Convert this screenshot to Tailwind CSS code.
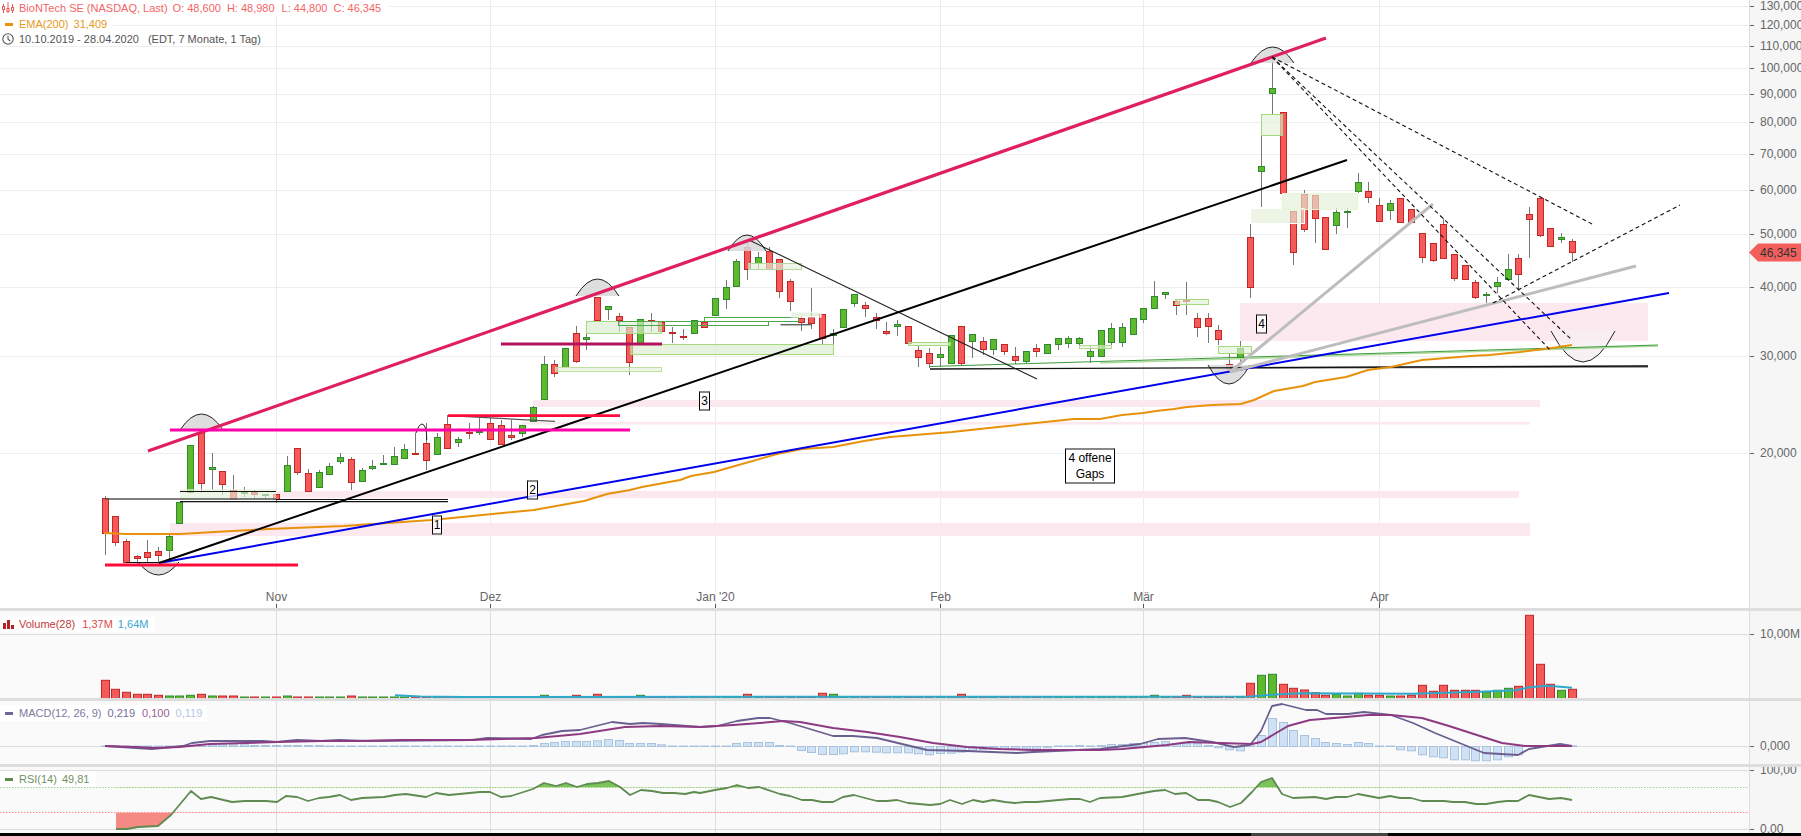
<!DOCTYPE html>
<html lang="de">
<head>
    <meta charset="UTF-8">
    <title>BioNTech SE - Chart</title>
    <script src="https://cdn.jsdelivr.net/npm/@tailwindcss/browser@4"></script>
</head>
<body class="bg-white overflow-hidden">
<div class="flex flex-col h-screen w-[1801px] font-['Liberation_Sans',Arial,sans-serif] text-[11px] leading-4">

    <!-- Price panel -->
    <div class="flex h-[608px] shrink-0">
        <div class="relative w-[1749px]">
            <svg id="price" class="block" width="1749" height="608" viewBox="0 0 1749 608"></svg>

            <div class="absolute left-0 top-0">
                <div class="flex items-center h-4 w-fit bg-white pr-[7px] text-[#f46464]">
                    <svg class="ml-[2px] mr-[5px]" width="12" height="12" viewBox="0 0 12 12" fill="none" stroke="#ee5a5a">
                        <path d="M1.5 2v9M6 0v11M10.5 2v9"/>
                        <rect x="0.5" y="4.5" width="2" height="3" fill="#fff"/>
                        <rect x="5" y="6.5" width="2" height="3" fill="#fff"/>
                        <rect x="9.5" y="5.5" width="2" height="3" fill="#fff"/>
                    </svg>
                    <span>BioNTech SE (NASDAQ, Last)</span>
                    <span class="ml-[5px]">O: 48,600</span>
                    <span class="ml-[6px]">H: 48,980</span>
                    <span class="ml-[7px]">L: 44,800</span>
                    <span class="ml-[6px]">C: 46,345</span>
                </div>
                <div class="flex items-center h-4 w-fit bg-white pr-[6px] text-[#e8981c]">
                    <span class="ml-[5px] mr-[6px] w-2 h-[3px] bg-[#e8920c]"></span>
                    <span>EMA(200)</span>
                    <span class="ml-[5px]">31,409</span>
                </div>
                <div class="flex items-center h-[14px] w-fit bg-white pr-[7px] text-[#555555]">
                    <svg class="ml-[2px] mr-[5px]" width="12" height="12" viewBox="0 0 12 12" fill="none" stroke="#555" stroke-width="1.1">
                        <circle cx="6" cy="6" r="5.2"/>
                        <path d="M6 2.8V6.3L8.3 8"/>
                    </svg>
                    <span>10.10.2019 - 28.04.2020</span>
                    <span class="ml-[9px]">(EDT, 7 Monate, 1 Tag)</span>
                </div>
            </div>

            <div class="absolute left-[432px] top-[515px] w-[10px] h-5 flex items-center justify-center bg-white/70 border-x border-x-black border-y-2 border-y-[#888888] text-xs">1</div>
            <div class="absolute left-[527px] top-[480px] w-[11px] h-5 flex items-center justify-center bg-white/70 border-x border-x-black border-y-2 border-y-[#888888] text-xs">2</div>
            <div class="absolute left-[699px] top-[391px] w-[11px] h-5 flex items-center justify-center bg-white/70 border-x border-x-black border-y-2 border-y-[#888888] text-xs">3</div>
            <div class="absolute left-[1256px] top-[314px] w-[11px] h-5 flex items-center justify-center bg-white/70 border-x border-x-black border-y-2 border-y-[#888888] text-xs">4</div>
            <div class="absolute left-[1065px] top-[448px] w-[50px] h-9 flex flex-col items-center justify-center bg-white border-x border-x-black border-y-2 border-y-[#888888] text-xs text-center">
                <span>4 offene</span>
                <span>Gaps</span>
            </div>
        </div>
        <svg id="price-axis" class="block bg-[#f6f6f6]" width="52" height="608" viewBox="1749 0 52 608"></svg>
    </div>
    <div class="h-[3px] shrink-0 bg-[#dddddd]"></div>

    <!-- Volume panel -->
    <div class="flex h-[87px] shrink-0">
        <div class="relative w-[1749px] bg-[#fafafa]">
            <svg id="volume" class="block" width="1749" height="87" viewBox="0 611 1749 87"></svg>
            <div class="absolute left-0 top-[5px] flex items-center h-4 w-[154px] bg-white">
                <svg class="ml-[3px] mr-[5px]" width="11" height="9" viewBox="0 0 11 9" fill="#b92222">
                    <rect x="0" y="3" width="3" height="6"/><rect x="4" y="0" width="3" height="9"/><rect x="8" y="5" width="3" height="4"/>
                </svg>
                <span class="text-[#c23a3a]">Volume(28)</span>
                <span class="ml-[7px] text-[#e04848]">1,37M</span>
                <span class="ml-[5px] text-[#3aa6cf]">1,64M</span>
            </div>
        </div>
        <svg id="volume-axis" class="block bg-[#f6f6f6]" width="52" height="87" viewBox="1749 611 52 87"></svg>
    </div>
    <div class="h-[3px] shrink-0 bg-[#dddddd]"></div>

    <!-- MACD panel -->
    <div class="flex h-[63px] shrink-0">
        <div class="relative w-[1749px] bg-[#fafafa]">
            <svg id="macd" class="block" width="1749" height="63" viewBox="0 701 1749 63"></svg>
            <div class="absolute left-0 top-[4px] flex items-center h-4 w-[207px] bg-white">
                <span class="ml-[5px] mr-[6px] w-2 h-[3px] bg-[#6a6a94]"></span>
                <span class="text-[#7a7a9e]">MACD(12, 26, 9)</span>
                <span class="ml-[6px] text-[#6f6f96]">0,219</span>
                <span class="ml-[7px] text-[#9c5a92]">0,100</span>
                <span class="ml-[6px] text-[#b4c6e0]">0,119</span>
            </div>
        </div>
        <svg id="macd-axis" class="block bg-[#f6f6f6]" width="52" height="63" viewBox="1749 701 52 63"></svg>
    </div>
    <div class="h-[3px] shrink-0 bg-[#dddddd]"></div>

    <!-- RSI panel -->
    <div class="flex h-[66px] shrink-0">
        <div class="relative w-[1749px] bg-[#fafafa]">
            <svg id="rsi" class="block" width="1749" height="66" viewBox="0 767 1749 66"></svg>
            <div class="absolute left-0 top-[4px] flex items-center h-4 w-[96px] bg-white">
                <span class="ml-[5px] mr-[6px] w-2 h-[3px] bg-[#5f8a50]"></span>
                <span class="text-[#6f9162]">RSI(14)</span>
                <span class="ml-[5px] text-[#6f9162]">49,81</span>
            </div>
        </div>
        <svg id="rsi-axis" class="block bg-[#f6f6f6]" width="52" height="66" viewBox="1749 767 52 66"></svg>
    </div>
    <div class="flex h-[3px] shrink-0 bg-black">
        <div class="ml-[1251px] w-[137px] bg-[#444444]"></div>
    </div>
</div>

<script>
const NS = 'http://www.w3.org/2000/svg';
const $ = id => document.getElementById(id);
function add(svg, tag, attrs, text) {
    const n = document.createElementNS(NS, tag);
    for (const k in attrs) n.setAttribute(k, attrs[k]);
    if (text) n.textContent = text;
    svg.appendChild(n);
    return n;
}
const line = (svg, x1, y1, x2, y2, stroke, w, extra) => add(svg, 'line', Object.assign({x1, y1, x2, y2, stroke, 'stroke-width': w}, extra || {}));
const poly = (svg, pts, stroke, w, extra) => add(svg, 'polyline', Object.assign({points: pts.map(p => p.join(',')).join(' '), fill: 'none', stroke, 'stroke-width': w, 'stroke-linejoin': 'round'}, extra || {}));
const cx = i => 104.5 + 10.71 * i;
const months = [[276, 'Nov'], [490, 'Dez'], [715, "Jan '20"], [940, 'Feb'], [1143, 'Mär'], [1379, 'Apr']];

// body top, body bottom, wick top, wick bottom, colour
const candles = [
[498,533,496,555,'r'],[516,542,516,546,'r'],[541,562,539,563,'r'],[556,558,555,565,'r'],[552,557,540,563,'r'],[551,555,547,563,'r'],
[536,550,535,562,'g'],[502,523,502,523,'g'],[445,492,445,492,'g'],[432,483,430,493,'r'],[467,469,453,490,'g'],[471,484,471,495,'r'],
[490,499,475,500,'r'],[492,493,487,497,'g'],[492,494,490,499,'r'],[494,495,494,499,'g'],[494,499,494,503,'r'],[465,491,456,491,'g'],
[448,472,448,475,'r'],[473,491,469,491,'r'],[472,487,470,487,'g'],[466,474,463,474,'g'],[457,461,453,464,'g'],[459,482,457,490,'r'],
[470,481,468,481,'g'],[466,468,460,470,'g'],[463,464,455,465,'g'],[456,464,447,464,'g'],[449,458,444,458,'g'],[453,454,433,454,'r'],
[443,460,423,470,'r'],[437,454,433,454,'g'],[424,448,415,449,'r'],[439,442,437,447,'g'],[432,433,423,439,'r'],[431,432,418,435,'g'],
[423,439,418,440,'r'],[425,444,420,444,'r'],[435,437,420,440,'r'],[425,433,425,437,'g'],[407,421,406,422,'g'],[364,399,356,400,'g'],
[364,373,360,377,'r'],[348,367,348,367,'g'],[333,361,326,363,'r'],[337,339,326,350,'g'],[297,320,297,321,'r'],[306,309,306,320,'g'],
[316,320,313,332,'r'],[327,362,327,375,'r'],[319,343,319,343,'g'],[320,321,313,332,'r'],[322,331,322,333,'r'],[332,333,327,343,'r'],
[336,337,329,340,'r'],[320,333,320,333,'g'],[322,327,318,328,'r'],[298,315,298,316,'g'],[287,299,280,309,'g'],[261,286,259,287,'g'],
[247,269,240,280,'r'],[257,263,252,270,'g'],[251,269,247,270,'r'],[259,291,259,298,'r'],[281,301,279,311,'r'],[318,322,316,331,'r'],
[317,323,288,329,'r'],[314,338,314,345,'r'],[333,335,329,344,'g'],[309,327,309,327,'g'],[294,303,294,307,'g'],[305,308,302,317,'r'],
[317,320,313,329,'r'],[331,333,322,335,'r'],[324,326,320,336,'g'],[326,343,326,343,'r'],[350,357,345,367,'r'],[353,363,348,368,'r'],
[354,357,347,367,'g'],[335,363,335,363,'g'],[326,363,326,366,'r'],[334,341,334,358,'g'],[341,349,337,355,'r'],[339,349,339,355,'g'],
[344,351,344,355,'r'],[356,360,347,364,'r'],[351,361,351,363,'g'],[348,351,344,357,'r'],[344,353,344,354,'g'],[338,344,338,350,'g'],
[338,343,336,348,'g'],[338,343,337,347,'g'],[351,356,345,363,'g'],[330,356,330,356,'g'],[328,342,323,347,'g'],[327,342,323,347,'g'],
[318,334,318,335,'g'],[308,319,308,323,'g'],[296,308,281,309,'g'],[292,294,292,299,'g'],[301,305,300,315,'r'],[300,301,282,315,'r'],
[318,327,313,337,'r'],[318,326,313,343,'r'],[330,339,325,345,'r'],[364,369,353,370,'r'],[348,357,341,362,'g'],[237,287,224,298,'r'],
[166,171,136,207,'g'],[88,93,57,115,'g'],[112,193,112,193,'r'],[211,252,211,265,'r'],[194,229,190,232,'r'],[195,218,195,243,'r'],
[217,249,217,249,'r'],[212,225,208,234,'g'],[211,212,208,228,'g'],[182,191,173,193,'g'],[191,197,182,203,'r'],[205,221,198,222,'r'],
[203,210,200,220,'g'],[198,222,198,223,'r'],[209,222,209,222,'r'],[233,257,233,263,'r'],[243,260,243,262,'r'],[224,258,218,259,'r'],
[254,278,254,281,'r'],[265,279,265,279,'r'],[282,297,280,299,'r'],[294,295,292,303,'g'],[282,286,277,293,'g'],[269,279,254,280,'g'],
[258,274,254,290,'r'],[214,219,207,258,'r'],[198,235,198,237,'r'],[228,246,228,246,'r'],[237,239,233,243,'g'],[241,252,239,262,'r']];
const FILL = {r: '#f45a5a', g: '#5fb92f'};
const EDGE = {r: '#c42525', g: '#2f8a2f'};

// main chart
const price = $('price');
[6, 25, 46, 68, 94, 122, 154, 190, 234, 287, 356, 453].forEach(y => line(price, 0, y + .5, 1749, y + .5, '#eeeeee', 1));
months.forEach(([x]) => line(price, x + .5, 0, x + .5, 604, '#ececec', 1));

[[170, 523, 1530, 536], [276, 491, 1519, 498], [533, 400, 1540, 407], [522, 422, 1530, 424.5], [1240, 303, 1648, 341]].forEach(([a, b, c, d]) =>
    add(price, 'rect', {x: a, y: b, width: c - a, height: d - b, fill: '#fce8ef'}));

candles.forEach((c, i) => {
    const x = Math.round(cx(i));
    add(price, 'rect', {x, y: c[2], width: 1, height: c[3] - c[2], fill: '#777777'});
    add(price, 'rect', {x: x - 2.5, y: c[0] + .5, width: 6, height: Math.max(c[1] - c[0], 1), fill: FILL[c[4]], stroke: EDGE[c[4]]});
});

// zones drawn in the chart
[[180, 489, 276, 500, '#e3efd8', 'none'], [586.5, 321.5, 661.5, 333.5, '#d9ecd0', '#a6d87c'], [618.5, 321.5, 768.5, 325.5, 'none', '#4ca64c'],
 [704.5, 317.5, 798.5, 321.5, 'none', '#4ca64c'], [630.5, 344.5, 833.5, 354.5, '#d9ecd0', '#a6d87c'], [555.5, 367.5, 661.5, 371.5, '#e3efd8', '#c0e0a0'],
 [748.5, 263.5, 801.5, 269.5, '#e3efd8', '#b5d8a0'], [791, 312, 821, 317, '#d9ecd0', '#fff'], [908.5, 342.5, 950.5, 345.5, '#e3efd8', '#a6d87c'],
 [1079.5, 345.5, 1111.5, 348.5, '#e3efd8', '#b0dc90'], [1175.5, 299.5, 1208.5, 304.5, '#e3efd8', '#a6d87c'], [1218.5, 346.5, 1251.5, 353.5, '#e3efd8', '#a6d87c'],
 [1261.5, 114.5, 1282.5, 135.5, '#e3efd8', '#a6d87c'], [1250.5, 208.5, 1304.5, 223.5, '#e3efd8', '#fff'], [1282.5, 193.5, 1357.5, 209.5, '#e3efd8', '#e8f3d8']
].forEach(([a, b, c, d, f, s]) => add(price, 'rect', {x: a, y: b, width: c - a, height: d - b, fill: f, 'fill-opacity': .65, stroke: s}));

// bows at highs and lows
[[180, 223, 430, 414, 1], [138, 179, 562, 575, 0], [576, 619, 296, 279, 1], [728, 766, 251, 235, 1], [1251, 1294, 63, 47, 1], [1208, 1250, 365, 384, 0], [1551, 1615, 331, 362, 0]].forEach(([a, b, base, tip], n) => {
    const d = `M${a} ${base}Q${(a + b) / 2} ${2 * tip - base} ${b} ${base}`;
    add(price, 'path', {d, fill: n == 6 ? '#f7eef2' : '#d8d8d8', 'fill-opacity': .85});
    add(price, 'path', {d, fill: 'none', stroke: '#222222', 'stroke-width': 1});
});
add(price, 'path', {d: 'M416 433Q419 424 422 424Q427 425 426.7 440', fill: 'none', stroke: '#222222', 'stroke-width': 1});

// thin support lines
line(price, 105, 499, 276, 499, '#555555', 1.4);
line(price, 180, 491.5, 276, 491.5, '#111111', 1.2);
line(price, 180, 501.7, 448, 501.7, '#111111', 1.2);
line(price, 276, 499.5, 448, 499.5, '#111111', 1.2);
line(price, 448, 415.7, 555, 421.3, '#555555', 1.2);
line(price, 780.5, 324.7, 812, 324.7, '#666666', 1.5);
line(price, 126, 562.5, 160, 562.5, '#111111', 1.2);
line(price, 1230, 367.8, 1648, 366.8, '#888888', 2);
line(price, 930, 369, 1648, 366, '#111111', 1.3);
line(price, 1100, 363, 1658, 346, '#b0dca0', 1.6);
line(price, 930, 366.5, 1658, 345, '#3a9a3a', 1);
line(price, 749, 240, 1037, 379, '#222222', 1.1);

// EMA 200
poly(price, [[104,533],[126,534],[180,534],[214,532],[268,529],[344,526],[432,520],[534,510],[584,501],[607,494],[630,490],[642,487],[680,480],[691,476],[714,472],[777,454],[802,449],[833,447],[864,441],[890,437],[952,432],[998,427],[1074,419],[1100,419],[1122,415],[1143,413],[1156,411],[1174,409],[1187,407],[1212,405],[1241,404],[1254,400],[1274,391],[1303,386],[1315,382],[1346,377],[1368,370],[1391,367],[1422,360],[1471,356],[1489,355],[1520,352],[1552,348],[1572,345]], '#e8920c', 2);

// trend lines
line(price, 159, 563, 1669, 293, '#0000ee', 2);
line(price, 159, 563, 1347, 160, '#000000', 2);
line(price, 1230, 372, 1433, 204, '#bdbdbd', 3);
line(price, 1230, 372, 1636, 266, '#bdbdbd', 3);
line(price, 148, 451, 1326, 38, '#e01f60', 3.2);
line(price, 170, 430, 630, 430, '#ff00aa', 2.8);
line(price, 105, 565, 298, 565, '#ff0c3c', 2.8);
line(price, 448, 415.7, 620, 415.7, '#ff0c3c', 2.8);
line(price, 501, 344, 662, 344, '#b3125c', 2.8);

// dashed lines from the peak
const dash = {'stroke-dasharray': '4 3'};
line(price, 1272, 57, 1594, 225, '#111111', 1.1, dash);
line(price, 1272, 57, 1572, 340, '#111111', 1.1, dash);
line(price, 1272, 57, 1551, 351, '#111111', 1.1, dash);
line(price, 1493, 303, 1680, 205, '#111111', 1.1, dash);

months.forEach(([x, t]) => {
    line(price, x + .5, 604, x + .5, 608, '#555555', 1);
    add(price, 'text', {x: x + .5, y: 601, 'text-anchor': 'middle', 'font-size': 12, fill: '#666666'}, t);
});

// price axis
const pa = $('price-axis');
line(pa, 1749.5, 0, 1749.5, 608, '#dddddd', 1);
[[6,'130,000'],[25,'120,000'],[46,'110,000'],[68,'100,000'],[94,'90,000'],[122,'80,000'],[154,'70,000'],[190,'60,000'],[234,'50,000'],[287,'40,000'],[356,'30,000'],[453,'20,000']].forEach(([y, t]) => {
    line(pa, 1750, y + .5, 1754, y + .5, '#666666', 1);
    add(pa, 'text', {x: 1760, y: y + 4, 'font-size': 12, fill: '#666666'}, t);
});
add(pa, 'polygon', {points: '1749,252.5 1758,243.5 1801,243.5 1801,261.5 1758,261.5', fill: '#f25f5c'});
add(pa, 'text', {x: 1760, y: 257, 'font-size': 12, fill: '#333333'}, '46,345');

function lowerGrid(svg, top, bottom, ys) {
    ys.forEach(y => line(svg, 0, y + .5, 1749, y + .5, '#dddddd', 1));
    months.forEach(([x]) => line(svg, x + .5, top, x + .5, bottom, '#dddddd', 1));
}
function axis(id, top, bottom, labels) {
    const a = $(id);
    line(a, 1749.5, top, 1749.5, bottom, '#dddddd', 1);
    labels.forEach(([y, t]) => {
        line(a, 1750, y + .5, 1754, y + .5, '#666666', 1);
        add(a, 'text', {x: 1760, y: y + 4, 'font-size': 12, fill: '#666666'}, t);
    });
}

// volume
const vol = $('volume');
lowerGrid(vol, 611, 698, [634]);
const volH = {0:17.7,1:8.7,2:5.7,3:3.7,4:3.7,5:2.7,6:2,7:2,8:2.7,9:3.7,10:2,11:2,12:2,17:2,23:2,41:2.7,44:2.7,46:3.7,50:2.7,60:3.7,67:4.7,68:3.7,80:3.7,98:2.7,101:2.7,
    107:14.7,108:22.7,109:23.7,110:13.7,111:9.7,112:8,113:5.3,114:2.7,115:3.7,116:2,117:4.7,118:2.7,119:2.7,120:2,121:2,122:2.7,123:12.7,124:6.7,125:12.7,126:7.7,127:7.7,128:7.7,129:5.7,130:7.7,131:9.7,132:11.7,133:82.7,134:33.7,135:13.7,136:7.7,137:8.7};
candles.forEach((c, i) => {
    const h = volH[i] || 1;
    add(vol, 'rect', {x: Math.round(cx(i)) - 3.5, y: 698 - h, width: 8, height: h + 2, fill: FILL[c[4]], stroke: EDGE[c[4]]});
});
poly(vol, [[395,695.3],[420,696.5],[464,697],[1250,696.5],[1279,694.3],[1301,693.3],[1413,693.7],[1480,691.7],[1516,690.3],[1529,687.3],[1547,685.7],[1560,686.7],[1572,687.7]], '#2fa8cc', 2);
axis('volume-axis', 611, 698, [[634, '10,00M']]);

// MACD
const macd = $('macd');
lowerGrid(macd, 701, 764, [746]);
const hist = {10:1.7,11:1.7,12:1.7,13:1.7,14:1,15:1,16:1,17:1,18:1,19:1,20:1,40:1,41:3,42:4,43:5,44:5,45:5,46:5.7,47:7,48:6,49:3,50:3,51:3,52:1.7,
    59:3,60:4,61:4,62:4,63:1,65:-4,66:-6,67:-8,68:-8,69:-7.3,70:-5.3,71:-5.3,72:-5.7,73:-6.3,74:-6.3,75:-6.3,76:-7.3,77:-8.3,78:-7,79:-6.7,80:-5.7,81:-4.3,82:-3,83:-3,84:-3,85:-2.7,86:-2.7,87:-2.7,88:-1.3,
    91:1,93:1,94:2,95:2,96:3,97:3,98:4,99:5,100:3,101:3,102:3,103:1,104:-1.3,105:-3.3,106:-4.3,107:.7,108:11,109:28,110:24,111:16,112:11,113:8,114:4,115:3,116:2,117:4,118:3,
    121:-3.3,122:-4.3,123:-8.3,124:-10.3,125:-11.3,126:-13.3,127:-13.3,128:-14.3,129:-14.3,130:-13.3,131:-10.3,132:-8.3,137:.7};
candles.forEach((c, i) => {
    const v = hist[i] === undefined ? .5 : hist[i];
    add(macd, 'rect', {x: Math.round(cx(i)) - 3.5, y: v > 0 ? 746.5 - v : 746.5, width: 8, height: Math.abs(v), fill: '#cfe1f5', stroke: '#a9c3df'});
});
poly(macd, [[105,746],[152,749],[183,746],[192,743],[210,741],[263,741],[277,742],[297,740],[321,741],[339,740],[366,741],[473,740],[487,738],[531,739],[542,735],[562,731],[580,730],[612,722],[630,724],[643,723],[661,724],[700,727],[717,726],[737,721],[758,718],[770,718],[790,723],[833,736],[853,736],[877,738],[927,750],[967,751],[1017,753],[1033,752],[1100,749],[1140,744],[1158,739],[1185,738],[1212,742],[1234,747],[1250,745],[1261,731],[1272,706],[1282,704],[1306,710],[1317,710],[1326,714],[1348,714],[1364,712],[1391,715],[1413,723],[1435,733],[1484,753],[1518,755],[1529,749],[1560,744],[1572,746]], '#6a5f8f', 1.8);
poly(macd, [[105,746],[134,747],[156,748],[179,747],[210,744],[245,743],[277,742],[321,741],[357,741],[402,740],[469,740],[536,738],[580,734],[625,727],[661,726],[700,727],[717,726],[733,725],[760,723],[783,721],[800,722],[833,728],[867,732],[900,737],[933,743],[967,747],[1000,749],[1033,750],[1100,750],[1122,749],[1167,745],[1189,742],[1252,744],[1261,742],[1288,726],[1310,720],[1346,717],[1368,715],[1391,715],[1422,718],[1449,726],[1480,736],[1502,743],[1525,746],[1572,746]], '#8e3a82', 2);
axis('macd-axis', 701, 764, [[746, '0,000']]);

// RSI
const rsi = $('rsi');
lowerGrid(rsi, 767, 833, [770, 829]);
line(rsi, 0, 787.5, 1749, 787.5, '#a6d58a', 1, {'stroke-dasharray': '1.5 1.5'});
line(rsi, 0, 812.5, 1749, 812.5, '#ff8a8a', 1, {'stroke-dasharray': '1.5 1.5'});
const rsiPts = [[116,829],[127,829],[138,827],[158,826],[171,815],[191,791],[201,799],[211,797],[232,802],[245,801],[266,801],[277,802],[286,796],[297,797],[308,801],[319,798],[329,797],[340,795],[351,800],[362,798],[384,797],[395,795],[406,794],[426,797],[436,793],[449,795],[480,792],[490,792],[501,797],[511,796],[533,789],[544,783],[556,786],[566,783],[577,787],[587,784],[598,783],[609,781],[620,787],[630,795],[641,790],[652,791],[663,793],[674,793],[685,794],[694,792],[700,793],[715,790],[727,788],[737,785],[748,788],[759,787],[780,794],[790,796],[802,800],[812,800],[822,802],[833,802],[843,797],[854,795],[865,798],[877,801],[887,801],[897,800],[908,803],[930,805],[940,804],[950,800],[962,804],[973,800],[983,802],[993,800],[1005,802],[1015,803],[1025,802],[1037,802],[1070,799],[1080,799],[1090,802],[1100,798],[1122,797],[1143,793],[1154,791],[1165,790],[1175,794],[1186,793],[1198,800],[1209,800],[1218,802],[1230,807],[1241,803],[1252,792],[1261,782],[1272,778],[1282,794],[1293,798],[1315,797],[1326,799],[1336,797],[1347,797],[1358,794],[1379,798],[1390,796],[1400,798],[1411,798],[1422,801],[1444,801],[1453,802],[1465,802],[1476,804],[1486,804],[1498,802],[1507,801],[1518,801],[1529,795],[1549,799],[1561,798],[1572,800]];
const defs = add(rsi, 'defs', {});
add(add(defs, 'clipPath', {id: 'rsi-high'}), 'rect', {x: 0, y: 767, width: 1749, height: 20.5});
add(add(defs, 'clipPath', {id: 'rsi-low'}), 'rect', {x: 0, y: 812.5, width: 1749, height: 21});
const closed = y => [[116, y], ...rsiPts, [1572, y]].map(p => p.join(',')).join(' ');
add(rsi, 'polygon', {points: closed(787.5), fill: '#7cc45a', 'clip-path': 'url(#rsi-high)'});
add(rsi, 'polygon', {points: closed(812.5), fill: '#f58a85', 'clip-path': 'url(#rsi-low)'});
poly(rsi, rsiPts, '#5f8a50', 1.8);
axis('rsi-axis', 767, 833, [[770, '100,00'], [829, '0,00']]);
</script>
</body>
</html>
